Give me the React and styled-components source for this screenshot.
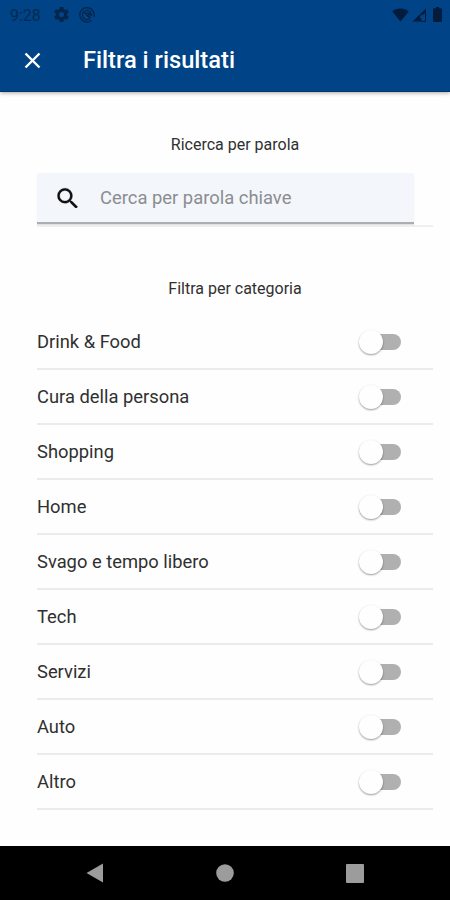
import React from "react";
import styled, { createGlobalStyle } from "styled-components";

const GlobalStyle = createGlobalStyle`
  * { box-sizing: border-box; }
  body { margin: 0; background: #fefefe; font-family: Roboto, sans-serif; }
`;

const Screen = styled.div`
  width: 450px;
  height: 900px;
  display: flex;
  flex-direction: column;
  overflow: hidden;
  background: #fefefe;
  color: #303030;
`;

const Header = styled.header`
  height: 92px;
  flex: none;
  background: #004386;
  border-bottom: 1px solid #063270;
  box-shadow: 0 1px 4px rgba(0, 0, 0, 0.35);
`;

const StatusBar = styled.div`
  height: 29px;
  padding: 0 8px 0 10px;
  display: flex;
  align-items: center;
  color: #042a52;
`;

const Clock = styled.span`
  width: 44px;
  padding-top: 1px;
  font-size: 16px;
  line-height: 29px;
`;

const StatusIcons = styled.div`
  display: flex;
  align-items: center;
  gap: ${({ $gap }) => $gap}px;
  margin-left: ${({ $end }) => ($end ? "auto" : 0)};
  color: ${({ $end }) => ($end ? "#041c3c" : "#04264b")};
  svg { display: block; }
`;

const TitleBar = styled.div`
  height: 62px;
  display: flex;
  align-items: center;
  padding-left: 24px;
`;

const CloseButton = styled.button`
  width: 17px;
  height: 17px;
  padding: 0;
  border: 0;
  background: none;
  color: #fff;
  svg { display: block; }
`;

const Title = styled.h1`
  margin: 0 0 0 42px;
  color: #fff;
  font-size: 23.700px;
  line-height: 28px;
  font-weight: 500;
`;

const Content = styled.main`
  flex: 1;
  padding: 41px 17px 0 37px;
`;

const SectionTitle = styled.h2`
  margin: 0;
  text-align: center;
  font-size: 16px;
  line-height: 24px;
  font-weight: 400;
`;

const SearchArea = styled.div`
  height: 54px;
  margin: 16px 0 50px;
  border-bottom: 2px solid #efefef;
`;

const SearchField = styled.label`
  width: 377px;
  height: 51px;
  display: flex;
  align-items: center;
  padding: 0 12px 0 20px;
  background: #f3f6fa;
  border-radius: 2px 2px 0 0;
  border-bottom: 2px solid #acadb0;
  box-shadow: 0 1px 1px #dedede;
  svg { flex: none; display: block; }
`;

const SearchInput = styled.input`
  flex: 1;
  min-width: 0;
  margin-left: 22px;
  padding: 0;
  border: 0;
  outline: 0;
  background: none;
  font: 400 18.400px/26px Roboto, sans-serif;
  &::placeholder { color: #8b8d90; opacity: 1; }
`;

const List = styled.ul`
  list-style: none;
  margin: 14px 0 0;
  padding: 0;
`;

const Row = styled.li`
  height: 55px;
  display: flex;
  align-items: center;
  justify-content: space-between;
  padding-right: 32px;
  border-bottom: 2px solid #ebebeb;
  font-size: 18.350px;
`;

const Label = styled.span`
  line-height: 23px;
`;

const Switch = styled.button`
  width: 42px;
  height: 24px;
  padding: 0;
  border: 0;
  background: none;
  display: flex;
  align-items: center;
  justify-content: flex-end;
`;

const Track = styled.span`
  width: 36px;
  height: 16px;
  border-radius: 8px;
  background: #b0b0b0;
  display: flex;
  align-items: center;
`;

const Thumb = styled.span`
  flex: none;
  width: 24px;
  height: 24px;
  margin-left: -6px;
  border-radius: 50%;
  background: #fefefe;
  box-shadow: 0 1px 2px rgba(0, 0, 0, 0.4);
`;

const NavBar = styled.nav`
  height: 54px;
  flex: none;
  padding: 0 86px;
  display: flex;
  align-items: center;
  justify-content: space-between;
  background: #000;
  color: #9c9c9c;
  svg { display: block; }
`;

const categories = [
  "Drink & Food",
  "Cura della persona",
  "Shopping",
  "Home",
  "Svago e tempo libero",
  "Tech",
  "Servizi",
  "Auto",
  "Altro",
];

const GearIcon = () => (
  <svg width="15" height="15" viewBox="2 2 20 20" fill="currentColor">
    <path d="M19.43 12.98c.04-.32.07-.64.07-.98s-.03-.66-.07-.98l2.11-1.65c.19-.15.24-.42.12-.64l-2-3.46c-.12-.22-.39-.3-.61-.22l-2.49 1c-.52-.4-1.08-.73-1.69-.98l-.38-2.65A.49.49 0 0 0 14 2h-4c-.25 0-.46.18-.49.42l-.38 2.65c-.61.25-1.17.59-1.69.98l-2.49-1c-.23-.09-.49 0-.61.22l-2 3.46c-.13.22-.07.49.12.64l2.11 1.65c-.04.32-.07.65-.07.98s.03.66.07.98l-2.11 1.65c-.19.15-.24.42-.12.64l2 3.46c.12.22.39.3.61.22l2.49-1c.52.4 1.08.73 1.69.98l.38 2.65c.03.24.24.42.49.42h4c.25 0 .46-.18.49-.42l.38-2.65c.61-.25 1.17-.59 1.69-.98l2.49 1c.23.09.49 0 .61-.22l2-3.46c.12-.22.07-.49-.12-.64zM12 15.5a3.5 3.5 0 1 1 0-7 3.5 3.5 0 0 1 0 7z" />
  </svg>
);

const CircleArrowIcon = () => (
  <svg width="16" height="16" viewBox="0 0 16 16" fill="none" stroke="currentColor">
    <path d="M12.500 13.500A7.200 7.200 0 1 1 14.900 10" strokeWidth="1.300" />
    <path d="M10.500 11.900A4.600 4.600 0 1 1 12.500 8.800" strokeWidth="1.200" />
    <path d="M5.500 5.500l6 6" strokeWidth="1.600" />
    <path d="M7 5l4.500 1v4z" fill="currentColor" stroke="none" />
  </svg>
);

const WifiIcon = () => (
  <svg width="17" height="14" viewBox="0 0 17 14" fill="currentColor">
    <path d="M8.500 13.500L.3 3.400C2.600 1.400 5.400.5 8.500.5s5.900.9 8.200 2.900z" />
  </svg>
);

const SignalIcon = () => (
  <svg width="15" height="14" viewBox="0 0 15 14">
    <path d="M.5 13.500L14 .5V4L9.500 8.500V13.500z" fill="currentColor" />
    <path d="M8 8.200L10.500 5.700V10.500H8z" fill="#004386" />
    <path d="M13.500 3V13.500H9.500" fill="none" stroke="currentColor" strokeWidth="1" />
  </svg>
);

const BatteryIcon = () => (
  <svg width="9" height="15" viewBox="0 0 9 15" fill="currentColor">
    <path d="M3 0h3v1.300h1.800q1.200 0 1.200 1.200v11.300q0 1.200-1.200 1.200H1.200Q0 15 0 13.800V2.500q0-1.200 1.200-1.200H3z" />
  </svg>
);

const SearchIcon = () => (
  <svg width="21" height="21" viewBox="2.700 2 18 18" fill="#101010">
    <path d="M15.500 14h-.79l-.28-.27A6.470 6.470 0 0 0 16 9.500 6.500 6.500 0 1 0 9.500 16c1.610 0 3.090-.59 4.230-1.570l.27.28v.79l5 4.990L20.490 19zM9.500 14a4.500 4.500 0 1 1 0-9 4.500 4.500 0 0 1 0 9z" stroke="#101010" strokeWidth=".2" />
  </svg>
);

function Category({ label }) {
  return (
    <Row>
      <Label>{label}</Label>
      <Switch type="button" role="switch" aria-checked="false" aria-label={label}>
        <Track><Thumb /></Track>
      </Switch>
    </Row>
  );
}

export default function App() {
  return (
    <Screen>
      <GlobalStyle />
      <Header>
        <StatusBar>
          <Clock>9:28</Clock>
          <StatusIcons $gap={10}><GearIcon /><CircleArrowIcon /></StatusIcons>
          <StatusIcons $gap={3} $end><WifiIcon /><SignalIcon /><span /><BatteryIcon /></StatusIcons>
        </StatusBar>
        <TitleBar>
          <CloseButton type="button" aria-label="Chiudi">
            <svg width="17" height="17" viewBox="0 0 17 17" stroke="currentColor" strokeWidth="2.400">
              <path d="M1.500 1.500l14 14M15.500 1.500l-14 14" />
            </svg>
          </CloseButton>
          <Title>Filtra i risultati</Title>
        </TitleBar>
      </Header>
      <Content>
        <SectionTitle>Ricerca per parola</SectionTitle>
        <SearchArea>
          <SearchField>
            <SearchIcon />
            <SearchInput placeholder="Cerca per parola chiave" />
          </SearchField>
        </SearchArea>
        <SectionTitle>Filtra per categoria</SectionTitle>
        <List>
          {categories.map((c) => <Category key={c} label={c} />)}
        </List>
      </Content>
      <NavBar>
        <svg width="17" height="20" viewBox="0 0 17 20" fill="currentColor"><path d="M17 .5v19L.5 10z" /></svg>
        <svg width="18" height="18" viewBox="0 0 18 18" fill="currentColor"><circle cx="9" cy="9" r="8.800" /></svg>
        <svg width="18" height="19" viewBox="0 0 18 19" fill="currentColor"><rect width="18" height="19" rx="1" /></svg>
      </NavBar>
    </Screen>
  );
}
